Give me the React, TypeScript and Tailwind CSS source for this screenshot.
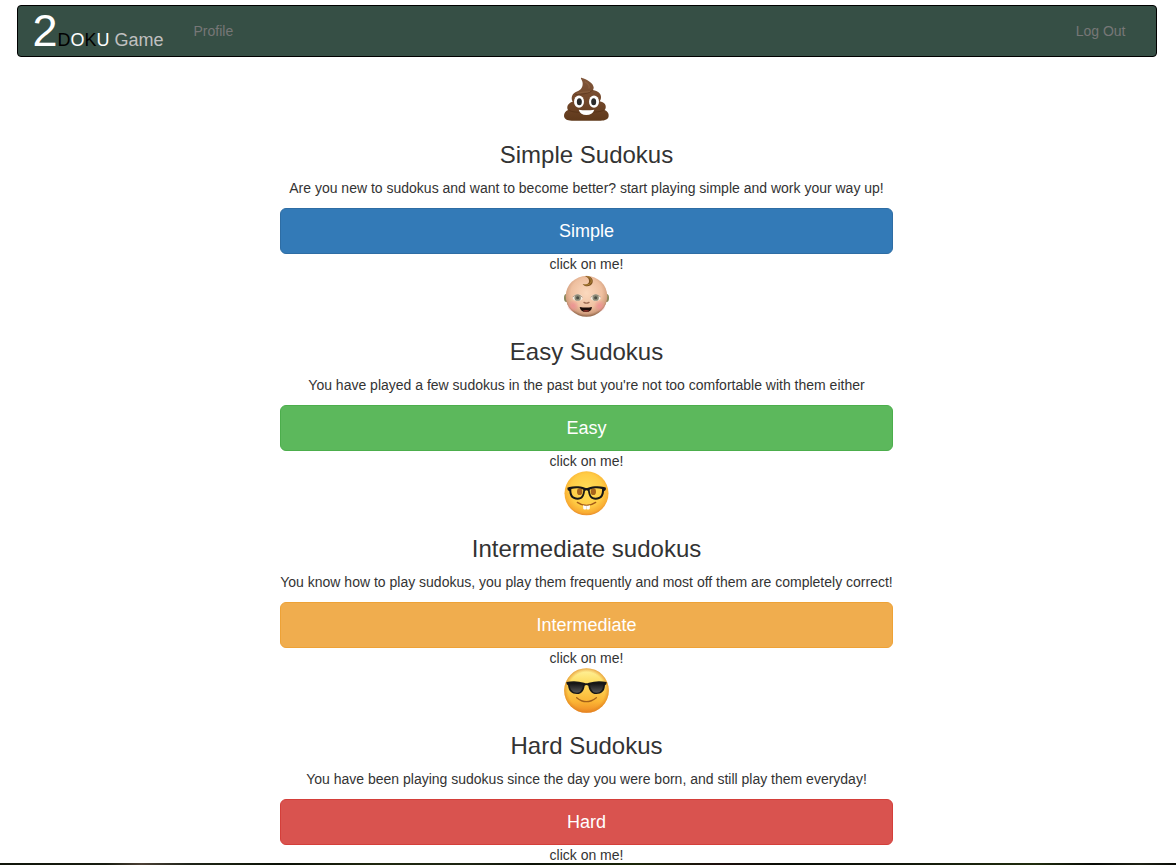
import React from "react";

function PoopIcon() {
  return (
    <svg viewBox="24 15 135 135" className="block h-[45px] w-[45px]">
      <defs>
        <linearGradient id="poop" x1="0" y1="0" x2="0" y2="1">
          <stop offset="0" stopColor="#80563a" />
          <stop offset="0.5" stopColor="#74492c" />
          <stop offset="1" stopColor="#5f391b" />
        </linearGradient>
      </defs>
      <path
        d="M78 18C91 22 112 32 113 46C113 50 112 52 111 54C126 57 135 64 135 75C135 80 134 84 131 88C145 91 151 99 149 108C148 111 147 113 146 114C154 118 159 124 158 132C157 142 147 146 134 146L47 146C33 146 25 141 24 132C24 124 28 118 36 114C31 105 35 93 50 89C45 80 46 68 58 61C62 58 67 57 71 54C80 48 84 33 75 20C74 18 76 17 78 18Z"
        fill="url(#poop)"
      />
      <path d="M57 67C74 68 103 65 110 54M38 114C49 122 73 121 91 121C112 121 135 120 144 114" fill="none" stroke="#4a280f" strokeWidth="3" opacity="0.45" />
      <path d="M86 29C96 35 103 42 98 50M62 65C72 60 89 61 102 58" fill="none" stroke="#9a704e" strokeWidth="4" opacity="0.4" />
      <ellipse cx="69" cy="89" rx="15" ry="18.5" fill="#fff" />
      <ellipse cx="114" cy="89" rx="15" ry="18.5" fill="#fff" />
      <ellipse cx="70" cy="89" rx="7.5" ry="10.5" fill="#2b2b2b" />
      <ellipse cx="113" cy="89" rx="7.5" ry="10.5" fill="#2b2b2b" />
      <path d="M68 113Q91 116 115 113C111 124 103 129 91 129C79 129 72 124 68 113Z" fill="#fff" />
    </svg>
  );
}

function BabyIcon() {
  return (
    <svg viewBox="24 12 135 135" className="block h-[45px] w-[45px]">
      <defs>
        <radialGradient id="baby" cx="0.5" cy="0.42" r="0.57">
          <stop offset="0" stopColor="#fbd9be" />
          <stop offset="0.65" stopColor="#efc0a0" />
          <stop offset="0.88" stopColor="#d3a080" />
          <stop offset="1" stopColor="#94694c" />
        </radialGradient>
        <radialGradient id="cheek">
          <stop offset="0" stopColor="#ee9294" />
          <stop offset="1" stopColor="#ee9294" stopOpacity="0.1" />
        </radialGradient>
      </defs>
      <ellipse cx="31" cy="84" rx="7" ry="12" fill="#87875a" />
      <ellipse cx="152" cy="84" rx="7" ry="12" fill="#87875a" />
      <ellipse cx="91.5" cy="79" rx="62.5" ry="61.5" fill="url(#baby)" />
      <path d="M87 18C105 17 114 28 109 40C104 51 86 52 80 42C88 45 98 43 99 35C100 29 97 22 87 18Z" fill="#7d521e" />
      <path d="M94 20C105 23 108 32 104 39C100 45 91 46 86 44" fill="none" stroke="#b5883a" strokeWidth="3" />
      <circle cx="51" cy="108" r="17" fill="url(#cheek)" />
      <circle cx="131" cy="108" r="17" fill="url(#cheek)" />
      <ellipse cx="65" cy="83" rx="15" ry="10" fill="#f7efe4" />
      <ellipse cx="119" cy="83" rx="15" ry="10" fill="#f7efe4" />
      <path d="M50 81Q65 67 80 82M104 82Q119 67 134 81" fill="none" stroke="#8f705a" strokeWidth="2" />
      <circle cx="65" cy="83" r="9.5" fill="#8d8c78" />
      <circle cx="119" cy="83" r="9.5" fill="#8d8c78" />
      <circle cx="65" cy="83" r="4.5" fill="#4a4c44" />
      <circle cx="119" cy="83" r="4.5" fill="#4a4c44" />
      <path d="M84 97Q91 102 99 97" fill="none" stroke="#9d6a50" strokeWidth="4" strokeLinecap="round" />
      <path d="M71 111Q91 114 108 111C107 121 101 126 90 126C79 126 73 121 71 111Z" fill="#1c0d0a" />
      <path d="M80 122Q90 118 101 122Q90 129 80 122Z" fill="#8d332a" />
    </svg>
  );
}

function NerdIcon() {
  return (
    <svg viewBox="24 15 135 135" className="block h-[45px] w-[45px]">
      <defs>
        <radialGradient id="nerd" cx="0.5" cy="0.43" r="0.57">
          <stop offset="0" stopColor="#ffdf58" />
          <stop offset="0.65" stopColor="#ffcc45" />
          <stop offset="0.9" stopColor="#f9ad32" />
          <stop offset="1" stopColor="#e98e2b" />
        </radialGradient>
      </defs>
      <circle cx="91.5" cy="82" r="66" fill="url(#nerd)" />
      <ellipse cx="71" cy="77" rx="8" ry="10" fill="#a8641c" />
      <ellipse cx="112" cy="77" rx="8" ry="10" fill="#a8641c" />
      <path d="M34 65L40 63C54 60 72 60 87 65Q91.5 67 96 65C112 60 130 60 144 63L150 65L149 72L144 76C143 92 136 101 119 101C105 101 98 92 96 75Q91.5 71 87 75C85 92 79 101 65 101C48 101 41 92 40 76L35 72ZM46 69C45 86 51 95 65 95C77 95 81 85 82 71C72 66 58 66 46 69ZM101 71C102 86 107 95 119 95C133 95 139 86 138 69C127 66 112 66 101 71Z" fill="#171717" fillRule="evenodd" />
      <path d="M64 109Q91 128 119 109" fill="none" stroke="#a35a18" strokeWidth="4" strokeLinecap="round" />
      <path d="M81 118Q91 121 102 118L101 129Q96 132 91 129Q86 132 82 129Z" fill="#fff" />
      <path d="M91.5 120V129" stroke="#ccb" strokeWidth="1.5" />
    </svg>
  );
}

function CoolIcon() {
  return (
    <svg viewBox="24 18 135 135" className="block h-[45px] w-[45px]">
      <defs>
        <linearGradient id="cool" x1="0" y1="0" x2="0" y2="1">
          <stop offset="0" stopColor="#fff4a0" />
          <stop offset="0.35" stopColor="#fdda5c" />
          <stop offset="0.75" stopColor="#fbb534" />
          <stop offset="1" stopColor="#ee8825" />
        </linearGradient>
        <radialGradient id="coolEdge">
          <stop offset="0.82" stopColor="#e78d22" stopOpacity="0" />
          <stop offset="1" stopColor="#dd7e1d" stopOpacity="0.65" />
        </radialGradient>
        <linearGradient id="lens" x1="0" y1="0" x2="0" y2="1">
          <stop offset="0" stopColor="#141414" />
          <stop offset="1" stopColor="#555" />
        </linearGradient>
      </defs>
      <circle cx="91.5" cy="85.5" r="67" fill="url(#cool)" />
      <circle cx="91.5" cy="85.5" r="67" fill="url(#coolEdge)" />
      <path d="M31 60Q58 54 84 62Q91 65 99 62Q125 54 152 60L151 67L147 70C146 88 137 96 121 96C107 96 99 86 97 71Q91 67 86 71C84 86 77 96 63 96C47 96 38 88 36 70L32 67Z" fill="#171717" />
      <path d="M41 66Q60 61 81 68C79 82 74 92 63 92C50 92 42 84 41 66ZM102 68Q122 61 142 66C141 84 134 92 121 92C110 92 104 82 102 68Z" fill="url(#lens)" />
      <path d="M62 107Q91 131 121 107" fill="none" stroke="#a36018" strokeWidth="4" strokeLinecap="round" />
    </svg>
  );
}

const levels = [
  {
    Icon: PoopIcon,
    title: "Simple Sudokus",
    text: "Are you new to sudokus and want to become better? start playing simple and work your way up!",
    label: "Simple",
    color: "bg-[#337ab7] border-[#2e6da4]",
  },
  {
    Icon: BabyIcon,
    title: "Easy Sudokus",
    text: "You have played a few sudokus in the past but you're not too comfortable with them either",
    label: "Easy",
    color: "bg-[#5cb85c] border-[#4cae4c]",
  },
  {
    Icon: NerdIcon,
    title: "Intermediate sudokus",
    text: "You know how to play sudokus, you play them frequently and most off them are completely correct!",
    label: "Intermediate",
    color: "bg-[#f0ad4e] border-[#eea236]",
  },
  {
    Icon: CoolIcon,
    title: "Hard Sudokus",
    text: "You have been playing sudokus since the day you were born, and still play them everyday!",
    label: "Hard",
    color: "bg-[#d9534f] border-[#d43f3a]",
  },
];

export default function App() {
  return (
    <div className="flex h-[865px] w-[1176px] flex-col overflow-hidden bg-white pt-[5px] font-['Liberation_Sans',Arial,sans-serif] text-[14px] leading-[20px] text-[#333]">
      <nav className="mb-5 ml-[17px] flex h-[52px] w-[1140px] shrink-0 justify-between rounded border border-black bg-[#364f45] pr-[15.5px] pl-[14.4px] text-[#777]">
        <div className="flex">
          <a href="#" className="block whitespace-nowrap text-[18px] leading-[50px] text-[#c0c0c0]">
            <span className="text-[45px] leading-[50px] text-white">2</span>
            <span className="text-black">D</span>
            <span className="text-white">O</span>
            <span className="text-black">K</span>
            <span className="text-white">U</span> Game
          </a>
          <a href="#" className="ml-[30px] pt-[15px]">Profile</a>
        </div>
        <a href="#" className="pt-[15px] pr-[15px]">Log Out</a>
      </nav>
      <main className="ml-[280px] flex h-[786px] w-[613px] shrink-0 flex-col">
        {levels.map(({ Icon, title, text, label, color }) => (
          <section key={label} className="flex h-[197px] shrink-0 flex-col items-center">
            <Icon />
            <h3 className="mt-5 mb-[10px] text-[24px] leading-[26px]">{title}</h3>
            <p className="mb-[10px] whitespace-nowrap">{text}</p>
            <button className={`h-[46px] w-full shrink-0 rounded-[6px] border text-[18px] leading-[24px] text-white ${color}`}>
              {label}
            </button>
            <span>click on me!</span>
          </section>
        ))}
      </main>
      <div className="relative h-[2px] w-full shrink-0 bg-[linear-gradient(90deg,#10150a_0%,#181c10_9%,#4b4035_12%,#20241a_16%,#192010_19%,#0b1006_24%,#20280f_32%,#1d2412_40%,#0d1207_45%,#1b2608_54%,#1d0f0c_61%,#080d04_67%,#10140a_75%,#202c0d_88%,#080b05_93%,#1d2114_97%,#080a05_100%)]" />
    </div>
  );
}
